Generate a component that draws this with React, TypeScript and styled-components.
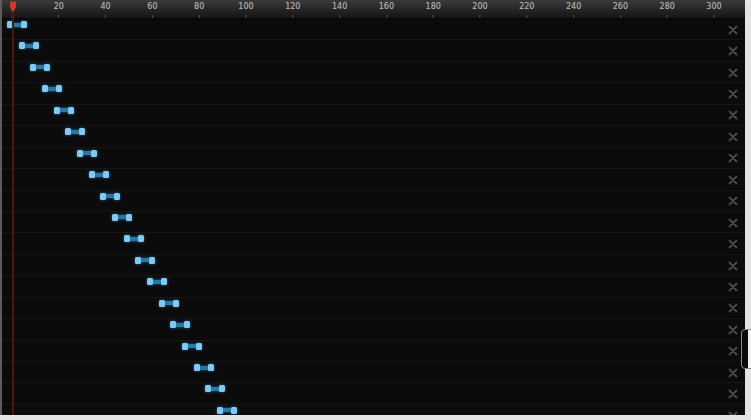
import React from "react";
import styled, { createGlobalStyle } from "styled-components";

const PX_PER_UNIT = 2.34;
const ORIGIN = 10;
const ROW_H = 21.45;
const ROWS = 19;
const LABELS = [0, 20, 40, 60, 80, 100, 120, 140, 160, 180, 200, 220, 240, 260, 280, 300];

const Global = createGlobalStyle`
  body {
    margin: 0;
    background: #e4e4e4;
    font-family: "DejaVu Sans", "Liberation Sans", sans-serif;
  }
`;

export default function App() {
  const rows = Array.from({ length: ROWS }, (_, i) => i);

  return (
    <Page>
      <Global />
      <Panel>
        <Ruler>
          {LABELS.map((v) => (
            <Mark key={v} style={{ left: ORIGIN + v * PX_PER_UNIT }}>
              {v !== 0 && <MarkLabel>{v}</MarkLabel>}
              <Tick />
            </Mark>
          ))}
        </Ruler>

        <Rows>
          {rows.map((i) => (
            <Row key={i}>
              <Track>
                <Clip style={{ left: 5 + i * 11.67 }}>
                  <Handle />
                  <Bar />
                  <Handle />
                </Clip>
              </Track>
              <RemoveCell>
                <CloseIcon />
              </RemoveCell>
            </Row>
          ))}
        </Rows>

        <PlayheadLine />
        <PlayheadHead viewBox="0 0 8 12">
          <path d="M1 1.5 Q1 0.5 2 0.5 H6 Q7 0.5 7 1.5 V6 L4 11.5 L1 6 Z" fill="#d23a22" />
        </PlayheadHead>
      </Panel>
      <EdgeTab />
    </Page>
  );
}

function CloseIcon() {
  return (
    <svg width="10" height="10" viewBox="0 0 10 10">
      <path d="M1.5 1.5 L8.5 8.5 M8.5 1.5 L1.5 8.5" stroke="#4a4a4a" strokeWidth="1.8" strokeLinecap="round" />
    </svg>
  );
}

const Page = styled.div`
  position: relative;
  width: 751px;
  height: 420px;
`;

const Panel = styled.div`
  position: relative;
  width: 743px;
  height: 415px;
  border-left: 2px solid #5c5c5c;
  background: #0b0b0b;
  overflow: hidden;
  display: flex;
  flex-direction: column;
`;

const Ruler = styled.div`
  position: relative;
  flex: 0 0 18px;
  background: linear-gradient(#3a3a3a, #252525 55%, #151515);
  border-bottom: 1px solid #050505;
`;

const Mark = styled.div`
  position: absolute;
  top: 0;
  height: 18px;
  transform: translateX(-50%);
  display: flex;
  flex-direction: column;
  align-items: center;
`;

const MarkLabel = styled.span`
  font-size: 8px;
  line-height: 8px;
  margin-top: 3px;
  color: #b4b4b4;
  text-shadow: 0 0 1px rgba(180, 180, 180, 0.4);
`;

const Tick = styled.span`
  margin-top: auto;
  width: 1px;
  height: 3px;
  background: #505050;
`;

const Rows = styled.div`
  flex: 1;
  display: flex;
  flex-direction: column;
`;

const Row = styled.div`
  flex: 0 0 ${ROW_H}px;
  box-sizing: border-box;
  display: flex;
  border-bottom: 1px solid #151515;
`;

const Track = styled.div`
  position: relative;
  flex: 1;
`;

const Clip = styled.div`
  position: absolute;
  top: 2px;
  width: 20px;
  height: 7px;
  display: flex;
  align-items: center;
  filter: drop-shadow(0 0 1.5px rgba(80, 170, 235, 0.55));
`;

const Handle = styled.span`
  flex: 0 0 6px;
  height: 7px;
  border-radius: 1.5px;
  background: #7ccbf7;
`;

const Bar = styled.span`
  flex: 1;
  height: 4px;
  background: #237aa6;
`;

const RemoveCell = styled.div`
  flex: 0 0 24px;
  display: flex;
  align-items: center;
  justify-content: center;
  padding-top: 1px;
`;

const PlayheadLine = styled.div`
  position: absolute;
  left: 9.5px;
  top: 10px;
  bottom: 0;
  width: 2px;
  background: #4a1a10;
`;

const PlayheadHead = styled.svg`
  position: absolute;
  left: 6.5px;
  top: 1px;
  width: 8px;
  height: 12px;
`;

const EdgeTab = styled.div`
  position: absolute;
  left: 741px;
  top: 329px;
  width: 14px;
  height: 40px;
  box-sizing: border-box;
  border: 1px solid #8a8a8a;
  border-radius: 4px;
  background: linear-gradient(90deg, #0b0b0b 0 6px, #f2f2f2 6px);
`;
